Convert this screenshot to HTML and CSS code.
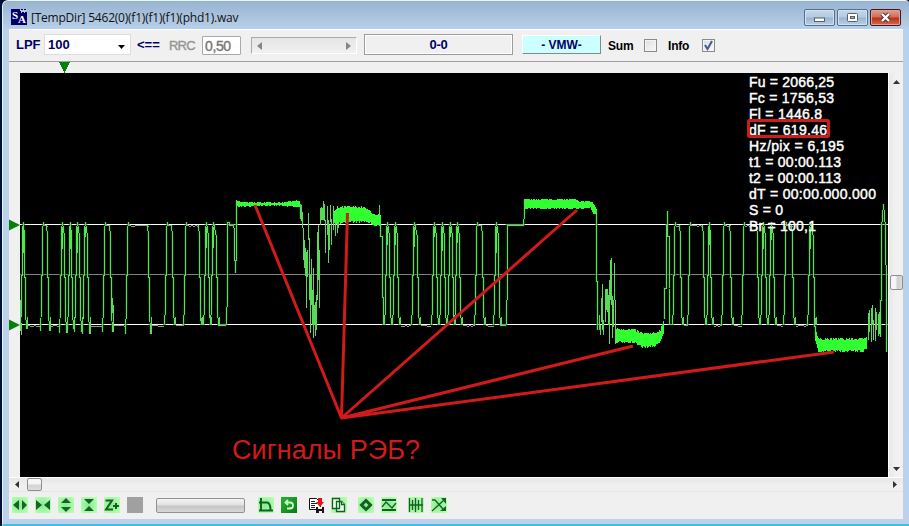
FILE: index.html
```html
<!DOCTYPE html>
<html lang="ru">
<head>
<meta charset="utf-8">
<title>[TempDir] 5462(0)(f1)(f1)(f1)(phd1).wav</title>
<link rel="stylesheet" href="styles.css">
</head>
<body>
<div class="window">
  <header class="titlebar">
    <svg class="logo" width="16" height="16"><rect width="16" height="16" fill="#000064"/><path d="M9 0h1v1h2v-1h1v1h2v-1h1v3h-2v1h-1v-1h-2v1h-1v-2h-1z" fill="#b9c8e4" shape-rendering="crispEdges"/><text x="1" y="10" class="logo-letter">S</text><text x="7" y="14" class="logo-letter">A</text></svg>
    <span class="title">[TempDir] 5462(0)(f1)(f1)(f1)(phd1).wav</span>
    <div class="controls">
      <button class="ctl"><svg width="29" height="15"><rect x="9.5" y="8" width="10" height="3.5" fill="#fff" stroke="#56616d"/></svg></button>
      <button class="ctl"><svg width="29" height="15"><rect x="9.5" y="3.5" width="10" height="8" rx="1" fill="#fff" stroke="#56616d"/><rect x="12.5" y="6.5" width="4" height="2" fill="#9ab" stroke="#56616d"/></svg></button>
      <button class="ctl close"><svg width="29" height="15"><path d="M11 4l7 7M18 4l-7 7" stroke="#5c3438" stroke-width="4.4"/><path d="M11 4l7 7M18 4l-7 7" stroke="#fff" stroke-width="2.3"/></svg></button>
    </div>
  </header>
  <main class="client">
    <div class="toolbar">
      <b class="navy lpf">LPF</b>
      <div class="combo"><b class="navy">100</b><svg width="8" height="4"><path d="M0 0h7L3.500 4z"/></svg></div>
      <b class="navy arrow">&lt;==</b>
      <span class="rrc">RRC</span>
      <div class="field">0,50</div>
      <div class="slider"><svg width="5" height="8"><path d="M5 0v8L0 4z"/></svg><svg width="5" height="8"><path d="M0 0v8l5-4z"/></svg></div>
      <div class="panel navy">0-0</div>
      <div class="vmw navy">- VMW-</div>
      <b class="sum">Sum</b><i class="check"></i>
      <b class="info">Info</b><i class="check"><svg width="11" height="11"><path d="M2 5l2.500 4L9 1" fill="none" stroke="#435a96" stroke-width="2"/></svg></i>
    </div>
    <div class="ruler"><svg width="12" height="11" shape-rendering="crispEdges"><path d="M0 0h11L5.500 11z" fill="#078007"/></svg></div>
    <div class="work">
      <div class="gutter"><svg width="11" height="404" viewBox="0 73 11 404"><path d="M0 219.500v11L11 225zM0 319.500v11L11 325z" fill="#078007"/></svg></div>
      <svg class="plot" width="868" height="404" viewBox="20 73 868 404">
        <g class="levels" shape-rendering="crispEdges"><path d="M20 224.500H888M20 324.500H888" stroke="#fff"/><path d="M20 274.500H888" stroke="#808080"/></g>
        <path id="glow" class="glow"/>
        <path id="trace" class="trace"/>
        <path id="noise" class="noise"/>
        <path id="band" class="band"/>
        <path id="dense" class="dense"/>
        <g class="readout">
          <text x="749" y="87" textLength="85">Fu = 2066,25</text>
          <text x="749" y="103" textLength="85">Fc = 1756,53</text>
          <text x="749" y="119" textLength="73">Fl = 1446,8</text>
          <text x="749" y="135" textLength="78">dF = 619,46</text>
          <text x="749" y="151" textLength="95">Hz/pix = 6,195</text>
          <text x="749" y="167" textLength="92">t1 = 00:00.113</text>
          <text x="749" y="183" textLength="92">t2 = 00:00.113</text>
          <text x="749" y="199" textLength="127">dT = 00:00.000.000</text>
          <text x="749" y="215" textLength="34">S = 0</text>
          <text x="749" y="231" textLength="67">Br = 100,1</text>
        </g>
        <g class="marks"><rect x="748.500" y="120.500" width="80" height="16" rx="1"/><path d="M255 205L341.500 418L347.500 213M341.500 418L577 210M341.500 418L633 346M341.500 418L834 352"/></g>
        <text class="caption" x="232" y="459" textLength="188">Сигналы РЭБ?</text>
      </svg>
      <div class="vscroll"><svg width="7" height="4"><path d="M0 4h7L3.500 0z"/></svg><i class="vthumb"></i><svg width="7" height="4"><path d="M0 0h7L3.500 4z"/></svg></div>
    </div>
    <div class="hscroll"><svg width="4" height="7"><path d="M4 0v7L0 3.500z"/></svg><i class="hthumb"></i><svg class="right" width="4" height="7"><path d="M0 0v7l4-3.500z"/></svg></div>
    <footer class="tools">
      <svg class="tool"><path d="M7 3v10L1 8zM10 3v10l5-5z"/></svg>
      <svg class="tool"><path d="M1 3v10l6-5zM15 3v10L9 8z"/></svg>
      <svg class="tool"><path d="M3 6h10L8 1zM3 10h10l-5 5z"/></svg>
      <svg class="tool"><path d="M3 2h10L8 7zM3 14h10L8 9z"/></svg>
      <svg class="tool"><path class="line" d="M1.500 3.500H8L2 12.500h7M9 9h6M12 6v6"/></svg>
      <i class="block"></i>
      <i class="progress"></i>
      <svg class="tool"><path class="line" d="M3 1v13M1 5.500h8.500q3 1 3 8M1 13.500h14"/></svg>
      <svg class="tool undo"><path class="hook" d="M7 3L4.500 5.500 7 8M5 5.500h4q3 0 3 3t-3 3H6"/></svg>
      <svg class="tool plain"><path d="M1.500 1.500h7l4 4v7h-11z" fill="#fff" stroke="#111"/><path d="M3 4.500h4M3 6.500h6M3 8.500h4M3 10.500h4" stroke="#222"/><path d="M10 1h4v4h2l-4 5-4-5h2z" fill="#e8101a"/><path d="M8 10h8v6H8z" fill="#151515"/><path d="M10 10h4v2h-4zM11 14h3v2h-3z" fill="#eee"/></svg>
      <svg class="tool sheets"><path d="M1.500 1.500h7v10h-7zM5.500 4.500h5l3 3v7h-8z"/><path d="M10.500 4.500v3h3"/></svg>
      <svg class="tool g1"><path class="line thick" d="M8 3.500L12.500 8 8 12.500 3.500 8z"/></svg>
      <svg class="tool"><path class="line" d="M1 3h14M1 13h14"/><path class="line thin" d="M1 10l4-5 6 6 4-5"/></svg>
      <svg class="tool g2"><path class="line thin" d="M1.500 1v14M4.500 3v10M7.500 1v14M10.500 3v10M14 1v14M1 8h14"/></svg>
      <svg class="tool"><path class="line thin" d="M1 3h3l8 9M1 14l12-11"/><path d="M10 1h5v6zM9 14h6V9z"/></svg>
    </footer>
  </main>
</div>
<script src="trace.js"></script>
</body>
</html>
```
FILE: styles.css
```css
* { box-sizing: border-box; }
body { margin: 0; width: 909px; height: 526px; overflow: hidden; font: 13px "Liberation Sans", sans-serif; background: #00103a; }
svg { display: block; flex: none; }
.window { width: 907px; height: 526px; margin-left: 2px; padding: 0 6px; border-top: 1px solid #edf5fc; border-left: 1px solid #e5f0fb; border-bottom: 2px solid #44bedb; border-radius: 6px 4px 0 0; background: linear-gradient(#98b3d0, #b9d1ea 29px, #bcd1eb); display: flex; flex-direction: column; }
.titlebar { height: 28px; display: flex; align-items: flex-start; flex: none; }
.logo { margin: 8px 4px 0 2px; }
.logo-letter { font: bold 11px "Liberation Serif", serif; fill: #fff; }
.title { font: 12px/16px "Open Sans", sans-serif; letter-spacing: -0.22px; color: #111; margin-top: 9px; white-space: nowrap; }
.controls { margin: 8px 2px 0 auto; display: flex; gap: 2px; }
.ctl { width: 31px; height: 17px; padding: 0; border: 1px solid #54708f; border-radius: 2px; background: linear-gradient(#c5d7ea, #b4cae1 48%, #98b3d0 52%, #b8d0e8); box-shadow: inset 0 0 0 1px #d3e2f1; }
.close { border-color: #4d1418; background: linear-gradient(#dda092, #cf6b59 48%, #b82d18 52%, #cf6c50); box-shadow: inset 0 0 0 1px #dfa08e; }
.client { width: 894px; height: 490px; background: #f0f0f0; border-top: 1px solid #fff; }
.toolbar { height: 32px; display: flex; align-items: flex-start; border-bottom: 1px solid #a0a0a0; }
.navy { color: #000064; }
.lpf { margin: 7px 0 0 7px; width: 28px; }
.combo { width: 87px; height: 21px; margin-top: 4px; background: #fff; border: 1px solid #ddd; display: flex; justify-content: space-between; padding: 2px 4px 0 3px; }
.combo svg { margin-top: 8px; }
.arrow { margin: 7px 0 0 6px; width: 32px; }
.rrc { margin: 8px 0 0; width: 33px; color: #969696; -webkit-text-stroke: .4px; letter-spacing: -.8px; }
.field { width: 39px; height: 19px; margin-top: 6px; padding: 1px 2px; border: 1px solid #aaa; border-radius: 1px; background: #fff; color: #777; font-size: 14px; line-height: 16px; -webkit-text-stroke: .4px; letter-spacing: -.4px; white-space: nowrap; }
.slider { width: 106px; height: 17px; margin: 7px 0 0 10px; border: 1px solid #aaa; border-right-color: #fff; border-bottom-color: #fff; background: linear-gradient(#e5e5e5, #f1f1f1); display: flex; justify-content: space-between; padding: 4px 5px; fill: #858585; }
.panel { width: 149px; height: 21px; margin: 4px 0 0 7px; border: 1px solid #9c9c9c; box-shadow: inset 1px 1px #fff, inset -1px -1px #fff; text-align: center; font-weight: bold; line-height: 19px; letter-spacing: -.3px; }
.vmw { width: 79px; height: 19px; margin: 5px 0 0 9px; border: 1px solid #fff; border-right-color: #888; border-bottom-color: #888; background: #cff; text-align: center; font: bold 12px/18px "Liberation Sans", sans-serif; }
.sum, .info { margin-top: 9px; font-size: 12px; color: #000; letter-spacing: -.2px; }
.sum { margin-left: 7px; width: 36px; }
.info { margin-left: 11px; width: 34px; }
.check { width: 13px; height: 13px; margin-top: 9px; border: 1px solid #8a8a8a; background: linear-gradient(135deg, #ddd, #fafafa); box-shadow: inset 0 0 0 1px #f4f4f4; }
.ruler { height: 11px; padding-left: 50px; }
.work { display: flex; height: 404px; }
.gutter { width: 11px; }
.plot { background: #000; }
.glow, .trace, .band, .dense, .noise, .marks { fill: none; }
.glow { stroke: #0a4a0a; stroke-width: 3; opacity: .55; }
.trace { stroke: #6ad36a; stroke-width: 1; shape-rendering: crispEdges; }
.noise { stroke: #8e9e8e; shape-rendering: crispEdges; }
.band { stroke: #58dc58; shape-rendering: crispEdges; }
.dense { stroke: #30ff30; shape-rendering: crispEdges; }
.readout { font-size: 14px; fill: #fff; stroke: #fff; stroke-width: .45px; }
.marks { stroke: #d11a1a; stroke-width: 3; stroke-linejoin: round; }
.caption { font-size: 27px; fill: #d11a1a; }
.vscroll { width: 15px; height: 404px; border-left: 1px solid #fff; display: flex; flex-direction: column; align-items: center; padding: 7px 0 6px; fill: #333; background: linear-gradient(90deg, #e8e8e8, #f1f1f1 50%); }
.vthumb { width: 13px; height: 15px; margin: 191px 0 auto; border: 1px solid #8f8f8f; border-radius: 2px; background: linear-gradient(90deg, #f5f5f5 40%, #cfcfcf 60%, #ddd); }
.hscroll { height: 15px; display: flex; align-items: center; border-top: 1px solid #fff; border-bottom: 1px solid #e5e5e5; padding: 0 6px; background: linear-gradient(#e7e7e7, #f0f0f0 60%); fill: #333; }
.hthumb { width: 15px; height: 13px; margin-left: 8px; border: 1px solid #8f8f8f; border-radius: 2px; background: linear-gradient(#f6f6f6 40%, #d4d4d4 60%, #ddd); }
.right { margin-left: auto; }
.tools { height: 27px; display: flex; padding: 5px 0 0 3px; gap: 7px; }
.tool { width: 16px; height: 16px; fill: #146426; background: radial-gradient(circle at 45% 50%, #84ea91, #b6ffb0 85%); }
.line { fill: none; stroke: #14601f; stroke-width: 2; }
.thin { stroke-width: 1.3; }
.thick { stroke-width: 3; }
.block { width: 16px; height: 16px; background: #a0a0a0; }
.progress { width: 89px; height: 15px; margin: 1px 6px 0; border: 1px solid #929292; border-radius: 2px; background: linear-gradient(#f3f3f3, #e2e2e2 45%, #c5c5c5 55%, #d8d8d8); }
.undo { background: linear-gradient(135deg, #27b52c, #087b16); }
.hook { fill: none; stroke: #d4ffd1; stroke-width: 1.8; }
.plain { background: none; margin-left: 4px; }
.sheets path { fill: #eaffe8; stroke: #145f24; stroke-width: 1.3; }
.g1, .g2 { margin-left: 4px; }
```
FILE: trace.js
```js
// Deterministic noise keeps the signal shape stable between loads.
let seed = 7;
const rnd = () => (seed = (seed * 16807) % 2147483647) / 2147483647;
const TOP = 225, LOW = 325;

// Each pulse is [rise, fall].
const groups = [
  [[22, 25], [42, 48], [61, 65], [69, 72], [76, 80], [84, 88], [104, 111], [127, 149], [166, 173], [185, 200], [205, 209], [212, 217]],
  [[386, 390], [394, 398], [413, 418], [433, 437], [441, 445], [449, 453], [456, 460], [476, 483], [495, 499]],
  [[674, 681], [689, 704], [708, 711], [723, 731], [743, 758], [762, 766], [770, 774], [785, 793], [809, 814]]
];
let trace = '', noise = '', band = '', dense = '';

function pulse(a, b, low) {
  const narrow = b - a < 6;
  trace += `M${a - 1.5} ${low}L${a - .5} ${LOW - 20}V275H${a + .5}V${TOP + 5}L${a + 1.5} ${TOP - 3}`;
  if (!narrow) {
    trace += `V${TOP}`;
    for (let x = a + 2; x < b - 1; x += 2) noise += `M${x} ${TOP + .5 + (rnd() > .6 ? 1 : 0)}h2`;
    trace += `M${b - 1.5} ${TOP}`;
  } else {
    dense += `M${a + 1.5} ${TOP + 2}v${8 + rnd() * 20}`;
  }
  trace += `L${b - .5} ${TOP + 12}V277H${b + .5}V${LOW - 15}L${b + 1.5} ${low}`;
  band += `M${b + 2.5} ${LOW - 8}V${low}M${a - 1.5} ${LOW - 6}V${low}`;
}

groups.forEach((group, g) => {
  let previous = [20, 383, 670][g];
  group.forEach(([a, b]) => {
    const low = g === 0 && a < 128 ? LOW + 4 + rnd() * 6 : LOW;
    for (let x = previous + 3; x < a - 2; x += 2) noise += `M${x} ${LOW + .5 + (rnd() > .5 ? 1 : 0)}h2`;
    pulse(a, b, low);
    previous = b;
  });
});
trace += 'M217.5 325H226L227.500 298V222H229V225H233L234.500 230V260H235.500V273M235.500 260H236.500V200';
trace += 'M380.500 225V236H382.500V297H383.500V325M499.500 325H506L507 300V225H523.500L524.500 213V199';
trace += 'M596.500 213V281H597.500V330M664.500 319V288H666.500V240L667.500 211V236H669V288L670 324H673.500';
trace += 'M814.500 300V326H815.500V335M880.500 337V300H881.500V228L883.500 204L885.500 228L886.500 300V352';
trace += 'M300.500 204V218L302.500 222';

// Envelope points: x, upper y, lower y. Ragged edges come from the jitter.
function envelope(points, jitter) {
  let out = '';
  for (let i = 1; i < points.length; i++) {
    const [x0, a0, b0] = points[i - 1], [x1, a1, b1] = points[i];
    for (let x = x0; x < x1; x++) {
      const k = (x - x0) / (x1 - x0);
      const y0 = Math.round(a0 + (a1 - a0) * k - rnd() * jitter);
      const y1 = Math.round(b0 + (b1 - b0) * k + rnd() * jitter);
      out += `M${x + .5} ${y0}V${y1}`;
    }
  }
  return out;
}
dense += envelope([[237, 202, 206], [247, 203, 206], [262, 203, 205], [281, 203, 205], [288, 202, 206], [300, 201, 207]], 1);
dense += envelope([[333, 213, 222], [340, 208, 222], [352, 208, 221], [362, 208, 221], [368, 211, 221], [376, 217, 226], [379, 215, 222], [381, 218, 229]], 2);
dense += envelope([[525, 200, 208], [574, 200, 208], [578, 202, 208], [590, 202, 207], [593, 204, 213], [597, 211, 215]], 1.4);
dense += envelope([[616, 330, 341], [632, 331, 341], [644, 335, 346], [654, 335, 345], [660, 331, 340], [664, 318, 331]], 2.6);
dense += envelope([[815, 330, 339], [818, 340, 350], [840, 340, 350], [863, 340, 350], [867, 336, 347]], 2.4);

const bars = [
  [301, 205, 220], [302, 212, 228], [303, 228, 260], [304, 240, 268], [305, 248, 276], [306, 252, 308], [307, 250, 277], [308, 213, 240], [309, 238, 300],
  [310, 275, 333], [311, 259, 305], [312, 290, 325], [313, 268, 338], [314, 305, 325], [315, 302, 336], [316, 295, 330], [317, 232, 300], [318, 225, 280], [319, 250, 308],
  [320, 208, 225], [321, 207, 220], [322, 208, 220], [323, 201, 220], [324, 204, 221], [325, 220, 253], [327, 206, 235], [328, 220, 263], [329, 225, 250],
  [330, 205, 222], [331, 219, 245], [333, 206, 230], [335, 210, 236], [337, 206, 233], [338, 215, 228], [347, 206, 226], [379, 205, 226],
  [597, 318, 330], [599, 315, 330], [600, 325, 335], [601, 298, 322], [602, 284, 330], [603, 320, 335], [605, 289, 322], [606, 289, 310],
  [607, 289, 312], [608, 295, 325], [609, 280, 344], [610, 260, 300], [611, 258, 305], [612, 296, 338], [613, 300, 327], [614, 263, 300], [615, 300, 344],
  [868, 313, 340], [869, 310, 332], [871, 308, 342], [872, 305, 325], [873, 320, 340], [875, 308, 341], [876, 312, 330], [878, 314, 336], [879, 312, 334],
  [24, 230, 267], [20, 300, 331], [21, 323, 335], [112, 298, 313], [113, 305, 330], [200, 300, 321]
];
bars.forEach(([x, a, b]) => { band += `M${x + .5} ${a}V${b}`; });

const put = (id, d) => document.getElementById(id).setAttribute('d', d);
put('glow', trace);
put('trace', trace);
put('noise', noise);
put('band', band);
put('dense', dense);
```
